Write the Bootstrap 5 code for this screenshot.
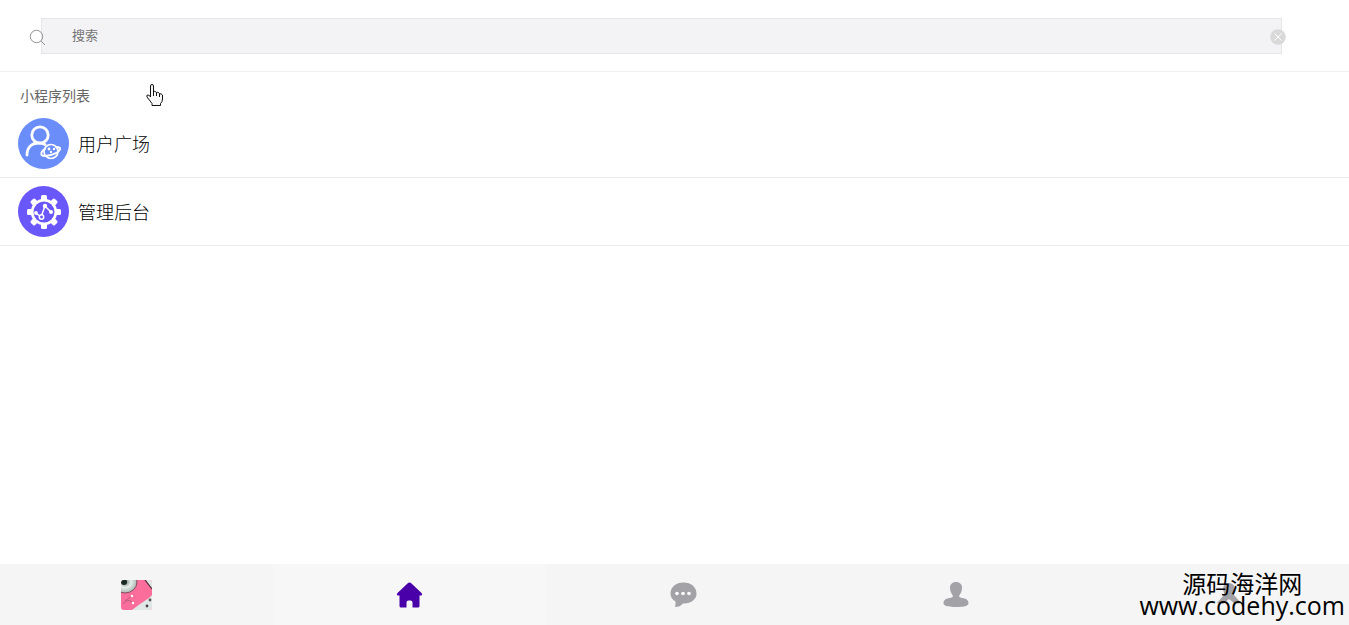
<!DOCTYPE html>
<html lang="zh-CN">
<head>
<meta charset="utf-8">
<meta name="viewport" content="width=device-width, initial-scale=1">
<title>小程序列表</title>
<link rel="stylesheet" href="https://cdn.jsdelivr.net/npm/bootstrap@5.3.0/dist/css/bootstrap.min.css">
<style>
body{font-family:"Noto Sans CJK SC",sans-serif;background:#fff}
.search-bar{padding:18px 67px 17px 41px;border-bottom:1px solid #f0f0f0}
.search-input{height:36px;padding:0 30px 4px;border:1px solid #e6e6ea;border-radius:0;background:#f3f3f6;font-size:13px;line-height:20px}
.search-input::placeholder{color:#757575;opacity:1}
.search-icon{left:-12px;top:11px}
.clear-btn{right:-5px;top:10px;width:18px;height:18px;line-height:0}
.list-title{padding:13px 20px 5px;font-size:14px;line-height:20px;color:#666}
.app-row{display:flex;align-items:center;gap:9px;padding:8px 18px;border-bottom:1px solid #eaeaea;font-size:18px;line-height:24px;color:#000;text-decoration:none}
.app-row span{padding-bottom:1px;font-weight:300}
.tab-bar{margin-right:-17px;height:61px;background:#f5f5f5}
.tab-bar a{color:#a2a2a7}
.tab-bar .active{background:#f7f7f7;color:#4a00a8}
.watermark{right:4px;bottom:9px;color:#000;font-size:24px;line-height:22px}
.watermark .site{font-family:"Open Sans",sans-serif;font-size:25px}
.pointer{left:146px;top:84px}
</style>
</head>
<body>
<div class="position-relative min-vh-100 d-flex flex-column overflow-hidden">
  <header class="search-bar">
    <form class="position-relative" role="search">
      <input class="form-control search-input" type="text" placeholder="搜索" aria-label="搜索">
      <svg class="search-icon position-absolute" width="18" height="18" fill="none" stroke="#929292" stroke-width="1"><circle cx="7.500" cy="7.500" r="6.200"/><path d="M12 12l4 4"/></svg>
      <button class="clear-btn position-absolute border-0 bg-transparent p-0" type="reset" aria-label="清除"><svg width="18" height="18"><circle cx="9" cy="9" r="7.800" fill="#d9d9d9"/><path d="M5.500 5.500l7 7M12.500 5.500l-7 7" stroke="#fff"/></svg></button>
    </form>
  </header>
  <main class="flex-grow-1">
    <h1 class="list-title fw-normal m-0">小程序列表</h1>
    <a class="app-row" href="#users">
      <svg width="51" height="51" viewBox="0 0 51 51" fill="none" stroke="#fff" stroke-linecap="round">
        <circle cx="25.500" cy="25.500" r="25.500" fill="#6b8df9" stroke="none"/>
        <circle cx="22" cy="17" r="8.200" stroke-width="2.800"/>
        <path d="M9 37C9 29 14 25 21 25Q24 25 27 26.500" stroke-width="2.800"/>
        <circle cx="33" cy="33.500" r="7" stroke-width="1.700"/>
        <path d="M27 31C22 34 22 38 27 38C34 38 44 33 42 30Q41 29 38 29" stroke-width="1.800"/>
        <circle cx="31" cy="31" r="1.400" fill="#fff" stroke="none"/><circle cx="36" cy="31" r="1.200" fill="#fff" stroke="none"/><circle cx="33" cy="34" r="1.200" fill="#fff" stroke="none"/>
      </svg>
      <span>用户广场</span>
    </a>
    <a class="app-row" href="#admin">
      <svg width="51" height="51" viewBox="0 0 51 51">
        <circle cx="25.500" cy="25.500" r="25.500" fill="#6a57fa"/>
        <g transform="translate(26 26)" fill="#fff">
          <g id="teeth"><rect x="-3" y="-17" width="6" height="34" rx="1.500"/><rect x="-17" y="-3" width="34" height="6" rx="1.500"/></g>
          <use href="#teeth" transform="rotate(45)"/>
          <circle r="13.200"/><circle r="10.500" fill="#6a57fa"/>
          <path d="M-8 1L-3 5L1 -6L7 0" fill="none" stroke="#fff" stroke-width="1.500"/>
          <circle cx="-8" cy="1" r="1.900"/><circle cx="1" cy="-6" r="2.200"/><circle cx="7" cy="0" r="2"/><circle cx="-2.500" cy="5" r="2.200" fill="#6a57fa" stroke="#fff" stroke-width="1.500"/>
        </g>
      </svg>
      <span>管理后台</span>
    </a>
  </main>
  <nav class="tab-bar nav nav-fill flex-nowrap" aria-label="主导航">
    <a class="col d-flex align-items-center justify-content-center" href="#cover" aria-label="封面">
      <svg width="31" height="30" viewBox="0 0 31 30"><defs><clipPath id="cover"><rect width="31" height="30" rx="3"/></clipPath><radialGradient id="disc"><stop offset="0" stop-color="#6f7c77"/><stop offset=".5" stop-color="#e6edea"/><stop offset="1" stop-color="#a9b7b1"/></radialGradient></defs><g clip-path="url(#cover)"><path fill="#fb6d9b" d="M0 0h31v30H0z"/><path fill="#dfe8e6" d="M25 0h6v9zM11 30l8-6 9-6 3-3v15z"/><path d="M24 0l7 9" stroke="#4b3440" stroke-width="1.200"/><ellipse cx="4" cy="2" rx="12" ry="11" fill="url(#disc)" stroke="#854a62"/><circle cx="3" cy="2" r="3" fill="#1c2823"/><path d="M2 24q5-6 9-2M4 21l7-5" stroke="#b85e82" fill="none"/><circle cx="11" cy="16" r="1.200" fill="#fff"/><circle cx="12" cy="23" r="1.200" fill="#fff"/><circle cx="26" cy="26" r="1.400" fill="#444"/><circle cx="29" cy="20" r="1.400" fill="#555"/></g></svg>
    </a>
    <a class="col d-flex align-items-center justify-content-center active" aria-current="page" href="#home" aria-label="首页">
      <svg width="27" height="26" viewBox="0 0 27 26" fill="currentColor"><path d="M13.500 0.500Q14.500 0.500 15.500 1.500L25.500 11Q27 13 25 13.500H23.500V24Q23.500 25.500 22 25.500H16.500V20.500Q16.500 18.500 14.500 18.500H12.500Q10.500 18.500 10.500 20.500V25.500H5Q3.500 25.500 3.500 24V13.500H2Q0 13 1.500 11L11.500 1.500Q12.500 0.500 13.500 0.500Z"/></svg>
    </a>
    <a class="col d-flex align-items-center justify-content-center" href="#messages" aria-label="消息">
      <svg width="27" height="26" viewBox="0 0 27 26"><path fill="currentColor" d="M13.500 .5C21 .5 26.500 5 26.500 11.500S20 22 13 21.500Q10 25 5 25Q6 22.500 5.500 19.500Q.5 16.500 .5 11.500C.5 5 6 .5 13.500 .5Z"/><g fill="#fff"><circle cx="7" cy="11.500" r="1.800"/><circle cx="13" cy="11.500" r="1.800"/><circle cx="19" cy="11.500" r="1.800"/></g></svg>
    </a>
    <a class="col d-flex align-items-center justify-content-center" href="#contacts" aria-label="联系人">
      <svg width="26" height="26" viewBox="0 0 26 26" fill="currentColor"><path d="M13 0C17 0 19 2.500 19 6C19 9.500 17.500 11.500 16.500 13C15.500 14.500 16.500 15.500 19 16C23 16.500 25.500 18 25.500 21C25.500 24.500 20 25 13 25S.5 24.500 .5 21C.5 18 3 16.500 7 16C9.500 15.500 10.500 14.500 9.500 13C8.500 11.500 7 9.500 7 6C7 2.500 9 0 13 0Z"/></svg>
    </a>
    <a class="col d-flex align-items-center justify-content-center" href="#profile" aria-label="我的">
      <svg width="26" height="26" viewBox="0 0 26 26" fill="currentColor"><circle cx="13" cy="7" r="6"/><path d="M8 8h10v5l7 8-6 1-6-5-6 5-6-1 7-8z"/></svg>
    </a>
  </nav>
  <div class="watermark position-absolute text-center pe-none"><div>源码海洋网</div><div class="site">www.codehy.com</div></div>
  <svg class="pointer position-absolute pe-none" width="18" height="23" viewBox="0 0 18 23"><path d="M4.500 13V2Q4.500.5 6 .5T7.500 2V8Q8 7 9.500 7.500Q10.500 8 10.500 9Q11 8 12.500 8.500Q13.500 9 13.500 10Q15 9 16.500 11V15Q16.500 18 14.500 19.500V21.500H6V19.500L1 13Q.2 11 2 11Q3.500 11 4.500 13Z" fill="#f8f8f8" stroke="#111"/><path d="M7.500 8v4M10.500 9v3M13.500 10v3" stroke="#111"/></svg>
</div>
<script src="https://cdn.jsdelivr.net/npm/bootstrap@5.3.0/dist/js/bootstrap.bundle.min.js"></script>
</body>
</html>
